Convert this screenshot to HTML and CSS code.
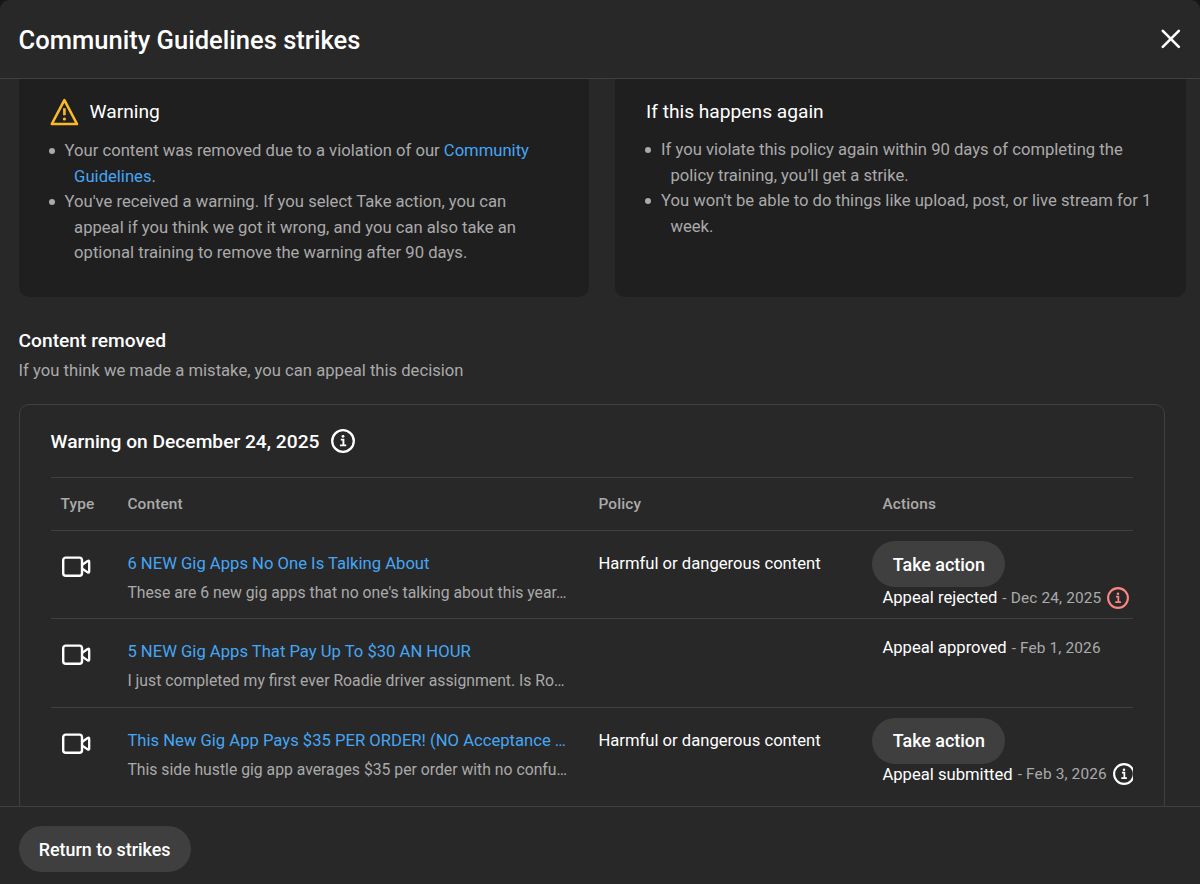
FILE: index.html
```
<!DOCTYPE html>
<html lang="en">

<head>
  <meta charset="UTF-8">
  <meta name="viewport" content="width=device-width, initial-scale=1.0">
  <title>Community Guidelines strikes</title>
  <link rel="stylesheet" href="styles.css">
</head>

<body>
  <!-- shared icons -->
  <svg class="icon-defs" width="0" height="0">
    <symbol id="icon-info" viewBox="0 0 24 24">
      <circle cx="12" cy="12" r="10.8" fill="none" stroke="currentColor" stroke-width="2.3" />
      <path d="M9.8 10.6h2.6v5.6M9 16.4h6.2" fill="none" stroke="currentColor" stroke-width="1.9" />
      <circle cx="12" cy="7.3" r="1.4" fill="currentColor" />
    </symbol>
    <symbol id="icon-video" viewBox="0 0 30 22">
      <rect x="1.2" y="1.6" width="18.8" height="18.2" rx="2.6" fill="none" stroke="currentColor" stroke-width="2.4" />
      <path d="M20.3 8.7l5.4-3.7q1.5-.8 1.5.9v9.6q0 1.7-1.5.9l-5.4-3.7" fill="none" stroke="currentColor" stroke-width="2.3" stroke-linejoin="round" />
    </symbol>
  </svg>

  <div class="dialog">
    <header class="header">
      <h1>Community Guidelines strikes</h1>
      <button class="close" aria-label="Close">
        <svg width="20" height="20" viewBox="0 0 20 20">
          <path d="M1.8 1.8l16 16M17.8 1.8L1.8 17.8" stroke="#fff" stroke-width="2.6" stroke-linecap="round" />
        </svg>
      </button>
    </header>

    <main class="content">
      <div class="cards">
        <section class="card">
          <h2 class="card-title">
            <svg class="warning-icon" width="30" height="28" viewBox="0 0 30 28">
              <path d="M14.4 2.2L27 26H1.8z" fill="none" stroke="#fbb829" stroke-width="2.6" stroke-linejoin="round" />
              <path d="M14.4 10.2v7" stroke="#fbb829" stroke-width="2.6" />
              <circle cx="14.4" cy="21" r="1.6" fill="#fbb829" />
            </svg>
            <span>Warning</span>
          </h2>
          <ul>
            <li>Your content was removed due to a violation of our <a href="#">Community<br>Guidelines</a>.</li>
            <li>You've received a warning. If you select Take action, you can<br>appeal if you think we got it wrong, and you can also take an<br>optional training to remove the warning after 90 days.</li>
          </ul>
        </section>

        <section class="card card-next">
          <h2 class="card-title">If this happens again</h2>
          <ul>
            <li>If you violate this policy again within 90 days of completing the<br>policy training, you'll get a strike.</li>
            <li>You won't be able to do things like upload, post, or live stream for 1<br>week.</li>
          </ul>
        </section>
      </div>

      <h2 class="section-title">Content removed</h2>
      <p class="section-text">If you think we made a mistake, you can appeal this decision</p>

      <section class="panel">
        <h3 class="panel-title">
          <span>Warning on December 24, 2025</span>
          <svg width="24" height="24"><use href="#icon-info" /></svg>
        </h3>

        <div class="table">
          <div class="row row-head">
            <div>Type</div>
            <div>Content</div>
            <div>Policy</div>
            <div>Actions</div>
          </div>

          <div class="row">
            <div class="type"><svg width="30" height="22"><use href="#icon-video" /></svg></div>
            <div class="video">
              <a href="#">6 NEW Gig Apps No One Is Talking About</a>
              <p>These are 6 new gig apps that no one's talking about this year…</p>
            </div>
            <div class="policy">Harmful or dangerous content</div>
            <div class="actions">
              <button class="button">Take action</button>
              <div class="status">Appeal rejected <span class="date">- Dec 24, 2025</span><svg class="info rejected" width="22" height="22"><use href="#icon-info" /></svg></div>
            </div>
          </div>

          <div class="row">
            <div class="type"><svg width="30" height="22"><use href="#icon-video" /></svg></div>
            <div class="video">
              <a href="#">5 NEW Gig Apps That Pay Up To $30 AN HOUR</a>
              <p>I just completed my first ever Roadie driver assignment. Is Ro…</p>
            </div>
            <div class="policy"></div>
            <div class="actions">
              <div class="status status-only">Appeal approved <span class="date">- Feb 1, 2026</span></div>
            </div>
          </div>

          <div class="row">
            <div class="type"><svg width="30" height="22"><use href="#icon-video" /></svg></div>
            <div class="video">
              <a href="#">This New Gig App Pays $35 PER ORDER! (NO Acceptance …</a>
              <p>This side hustle gig app averages $35 per order with no confu…</p>
            </div>
            <div class="policy">Harmful or dangerous content</div>
            <div class="actions">
              <button class="button">Take action</button>
              <div class="status">Appeal submitted <span class="date">- Feb 3, 2026</span><svg class="info" width="22" height="22"><use href="#icon-info" /></svg></div>
            </div>
          </div>
        </div>
      </section>
    </main>

    <footer class="footer">
      <button class="button button-return">Return to strikes</button>
    </footer>
  </div>
</body>

</html>
```

FILE: styles.css
```
* {
  box-sizing: border-box;
}

body {
  margin: 0;
  background-color: #161616;
  font-family: Roboto, Arial, sans-serif;
  color: #fff;
}

h1,
h2,
h3,
p,
ul {
  margin: 0;
  padding: 0;
}

a {
  color: #45a6f5;
  text-decoration: none;
}

button {
  border: none;
  font-family: inherit;
  color: #fff;
  cursor: pointer;
}

svg {
  display: block;
  flex: none;
}

.icon-defs {
  position: absolute;
}

.dialog {
  display: flex;
  flex-direction: column;
  height: 884px;
  background-color: #282828;
  border-radius: 9px 9px 0 0;
  overflow: hidden;
}

.header {
  display: flex;
  justify-content: space-between;
  align-items: center;
  height: 79px;
  flex: none;
  padding: 0 19.5px 0 18.6px;
  border-bottom: 1px solid #404040;
}

.header h1 {
  padding-top: 2px;
  font-size: 25.55px;
  font-weight: 500;
  line-height: 36px;
}

.close {
  padding: 0;
  background: none;
}

.content {
  flex: 1;
  min-height: 0;
  overflow: hidden;
  padding: 0 14px 0 18.6px;
}

.cards {
  display: grid;
  grid-template-columns: 570.4px 571px;
  gap: 26px;
  height: 218px;
}

.card {
  padding: 16px 31px;
  background-color: #1f1f1f;
  border-radius: 0 0 10px 10px;
}

.card-title {
  display: flex;
  align-items: center;
  gap: 10px;
  height: 32px;
  font-size: 19.2px;
  font-weight: 400;
}

.warning-icon {
  margin-top: 2px;
}

.card ul {
  margin-top: 11px;
  list-style: none;
  font-size: 16.64px;
  line-height: 25.6px;
  color: #aaa;
  white-space: nowrap;
}

.card-next ul {
  margin-top: 10px;
}

.card li {
  padding-left: 24.5px;
  text-indent: -24px;
}

/* round bullet in front of the first line */
.card li::before {
  content: "";
  display: inline-block;
  width: 6px;
  height: 6px;
  margin-right: 10px;
  margin-left: -1.5px;
  border-radius: 50%;
  background-color: #aaa;
  vertical-align: 2px;
}

.section-title {
  margin-top: 30px;
  font-size: 19.2px;
  font-weight: 500;
  line-height: 28px;
}

.section-text {
  margin-top: 3px;
  font-size: 16.64px;
  line-height: 26px;
  color: #aaa;
}

.panel {
  width: 1146.4px;
  height: 440px;
  margin-top: 20px;
  padding: 0 31px;
  border: 1px solid #404040;
  border-radius: 10px;
}

.panel-title {
  display: flex;
  align-items: center;
  gap: 11.5px;
  height: 72px;
  font-size: 19.2px;
  font-weight: 500;
}

.row {
  display: grid;
  grid-template-columns: 76.8px 471px 274px 1fr;
  height: 88.4px;
  border-top: 1px solid #404040;
  font-size: 16.64px;
  white-space: nowrap;
}

.row-head {
  grid-template-columns: 76.8px 471px 284px 1fr;
  align-items: center;
  height: 53px;
  font-size: 15.4px;
  font-weight: 500;
  letter-spacing: 0.15px;
  color: #aaa;
}

.row-head div:first-child {
  padding-left: 10px;
}

.type {
  padding: 25px 0 0 11px;
}

.video {
  padding-top: 20px;
}

.video a {
  display: block;
  line-height: 26px;
}

.video p {
  margin-top: 3px;
  font-size: 15.75px;
  line-height: 26px;
  color: #aaa;
}

.policy {
  padding-top: 20px;
  line-height: 26px;
}

.actions {
  padding-top: 10px;
  overflow: hidden;
}

.button {
  display: block;
  width: 133px;
  height: 46px;
  padding: 0;
  background-color: #3f3f3f;
  border-radius: 23px;
  font-size: 17.9px;
  font-weight: 500;
}

.status {
  display: flex;
  align-items: center;
  gap: 5px;
  height: 21px;
  padding-left: 10px;
}

.status-only {
  margin-top: 8px;
}

.date {
  font-size: 15.4px;
  letter-spacing: 0.15px;
  color: #aaa;
}

.info {
  margin-left: 1px;
}

.rejected {
  color: #fb8681;
}

.footer {
  display: flex;
  align-items: center;
  flex: none;
  height: 78px;
  padding: 7px 18.6px 0;
  border-top: 1px solid #404040;
}

.button-return {
  width: 172px;
}
```
